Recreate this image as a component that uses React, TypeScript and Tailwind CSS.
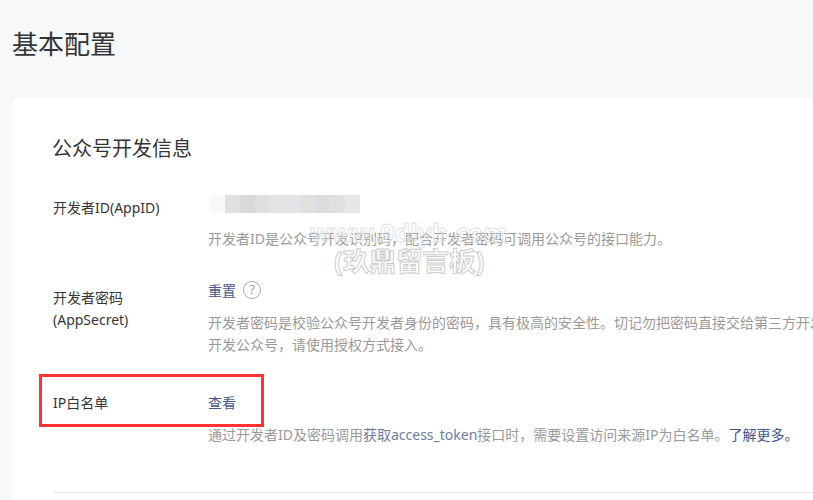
const cells = ["#f8f8f8","#e0e0e0","#d9d9d9","#e0dfdd","#e4e4e4","#e2e4e7","#e3e1de","#dcdde0","#e1e0de","#e6e7e9"];

function Row({ label, value, children, className }: { label: React.ReactNode; value: React.ReactNode; children: React.ReactNode; className: string }) {
  return (
    <div className={`flex ${className}`}>
      <div className="w-[155px] shrink-0 text-[14px] leading-[22px] text-[#353535]">{label}</div>
      <div className="w-[640px] shrink-0">
        {value}
        {children}
      </div>
    </div>
  );
}

export default function App() {
  return (
    <div className="w-[813px] h-[500px] overflow-hidden bg-[#f6f8f9] pl-[13px] font-['Noto_Sans','Noto_Sans_CJK_SC',sans-serif] relative">
      <h1 className="h-[98px] pt-[26px] text-[26px] leading-[36px] text-[#353535] font-normal -ml-px">基本配置</h1>
      <div className="w-[900px] h-[500px] bg-white rounded-[3px] pt-[37px] pl-[40px]">
        <h2 className="text-[20px] leading-[28px] font-normal text-[#353535] -ml-px">公众号开发信息</h2>
        <Row
          className="mt-[33px]"
          label={<div className="pt-[1px]">开发者ID(AppID)</div>}
          value={
            <div className="flex h-[18px] ml-[2px] -mt-px">
              {cells.map((c, i) => (
                <div key={i} className="w-[15px] h-full" style={{ backgroundColor: c }} />
              ))}
            </div>
          }
        >
          <p className="mt-[15px] text-[14px] leading-[22px] text-[#9a9a9a]">开发者ID是公众号开发识别码，配合开发者密码可调用公众号的接口能力。</p>
        </Row>
        <Row
          className="mt-[30px]"
          label={<div className="pt-[7px]">开发者密码<br />(AppSecret)</div>}
          value={
            <div className="flex items-center gap-[7px] h-[22px] -mt-px text-[14px] text-[#44578b]">
              重置
              <span className="w-[18px] h-[18px] rounded-full border-[1.5px] border-[#a8a8a8] text-[#a0a0a0] text-[13px] leading-[15px] text-center">?</span>
            </div>
          }
        >
          <p className="mt-[11px] text-[14px] leading-[22px] text-[#9a9a9a] whitespace-nowrap">
            开发者密码是校验公众号开发者身份的密码，具有极高的安全性。切记勿把密码直接交给第三方开发者
            <br />
            开发公众号，请使用授权方式接入。
          </p>
        </Row>
        <Row
          className="mt-[36px]"
          label={<div>IP白名单</div>}
          value={<div className="h-[22px] leading-[22px] text-[14px] text-[#44578b]">查看</div>}
        >
          <p className="mt-[10px] text-[14px] leading-[22px] text-[#9a9a9a]">
            通过开发者ID及密码调用<span className="text-[#6f7ba0]">获取access_token</span>接口时，需要设置访问来源IP为白名单。<span className="text-[#44578b]">了解更多。</span>
          </p>
        </Row>
        <div className="mt-[46px] h-px bg-[#e7e7eb]" />
      </div>

      <div className="absolute left-[39px] top-[374px] w-[225px] h-[53px] border-[3px] border-[#ff3333]" />
      <div className="absolute left-[310px] top-[214px] text-[25px] leading-[36px] font-bold text-transparent [-webkit-text-stroke:1px_#e2e2e2] whitespace-nowrap">www.9dlyb.com</div>
      <div className="absolute left-[334px] top-[243px] text-[26.5px] leading-[36px] font-bold text-white [-webkit-text-stroke:1px_#cccccc] whitespace-nowrap">(玖鼎留言板)</div>
    </div>
  );
}
